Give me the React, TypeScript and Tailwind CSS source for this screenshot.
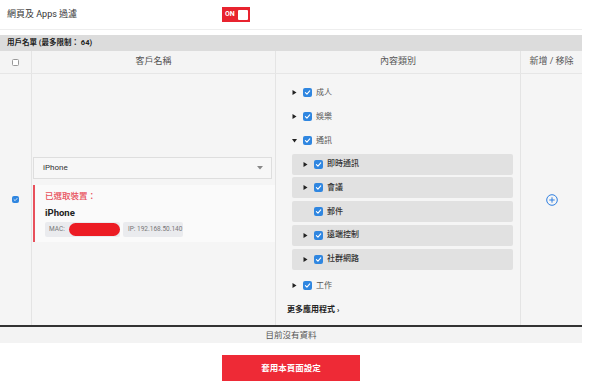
import React from 'react';

const Tri = ({ open }: { open?: boolean }) => (
  <svg width="5" height="5" viewBox="0 0 5 5" className="shrink-0">
    {open ? <path d="M0 1 L5 1 L2.5 4.5 Z" fill="#222" /> : <path d="M0.5 0 L4.5 2.5 L0.5 5 Z" fill="#222" />}
  </svg>
);

const Check = ({ size = 9 }: { size?: number }) => (
  <span
    className="shrink-0 rounded-[2px] bg-[#2f86e0] flex items-center justify-center"
    style={{ width: size, height: size }}
  >
    <svg width={size - 2} height={size - 2} viewBox="0 0 10 10">
      <path d="M2 5.2 L4.2 7.3 L8.2 2.8" fill="none" stroke="#fff" strokeWidth="1.6" strokeLinecap="round" strokeLinejoin="round" />
    </svg>
  </span>
);

const TopItem = ({ label, open }: { label: string; open?: boolean }) => (
  <div className="h-[24px] flex items-center">
    <Tri open={open} />
    <span className="ml-[6px]"><Check /></span>
    <span className="ml-[4px] text-[#555]">{label}</span>
  </div>
);

const SubItem = ({ label, arrow = true }: { label: string; arrow?: boolean }) => (
  <div className="h-[21px] rounded-[2px] bg-[#e1e1e1] flex items-center pl-[11px]">
    <span className="w-[5px] shrink-0">{arrow && <Tri />}</span>
    <span className="ml-[6px]"><Check /></span>
    <span className="ml-[4px] font-medium text-[#333]">{label}</span>
  </div>
);

export default function App() {
  return (
    <div className="w-[600px] h-[385px] bg-white font-['Roboto','Noto_Sans_CJK_TC',sans-serif] text-[8px] text-[#333] overflow-hidden">
      <div className="w-[582px]">
        {/* filter toggle */}
        <div className="h-[30px] flex items-center border-b border-[#eeeeee]">
          <span className="pl-[7px] w-[222px] text-[9px] text-[#333]">網頁及 Apps 過濾</span>
          <div className="w-[28px] h-[15px] bg-[#e8232f] flex items-center justify-between pl-[3px] pr-[2px]">
            <span className="text-[7px] font-bold text-white leading-none">ON</span>
            <span className="w-[10px] h-[10px] bg-white rounded-[1px]" />
          </div>
        </div>

        <div className="mt-[5px] h-[16px] bg-[#dcdcdc] flex items-center pl-[7px] font-bold text-[7.5px] text-[#222]">
          用戶名單 (最多限制： 64)
        </div>

        {/* header */}
        <div className="grid grid-cols-[32px_244px_245px_61px] h-[23px] bg-[#f4f4f4] border-b border-[#e6e6e6] text-[9px] text-[#555]">
          <div className="flex items-center justify-center border-r border-[#e4e4e4]">
            <span className="w-[7px] h-[7px] bg-white border border-[#999] rounded-[1.5px]" />
          </div>
          <div className="flex items-center justify-center border-r border-[#e4e4e4]">客戶名稱</div>
          <div className="flex items-center justify-center border-r border-[#e4e4e4]">內容類別</div>
          <div className="flex items-center justify-center">新增 / 移除</div>
        </div>

        {/* body */}
        <div className="grid grid-cols-[32px_244px_245px_61px] h-[251px] bg-[#f5f5f5]">
          <div className="flex items-center justify-center border-r border-[#e4e4e4]">
            <Check size={7} />
          </div>

          <div className="flex flex-col justify-center pl-[1px] pr-[1px] border-r border-[#e4e4e4]">
            <div className="w-[239px] h-[22px] bg-[#f7f7f7] border border-[#dedede] flex items-center justify-between pl-[9px] pr-[8px]">
              <span className="text-[#333]">iPhone</span>
              <svg width="6" height="4" viewBox="0 0 6 4"><path d="M0 0 L6 0 L3 3.5 Z" fill="#888" /></svg>
            </div>
            <div className="mt-[6px] w-[242px] h-[57px] bg-[#fafafa] border-l-2 border-[#e8505b] pl-[10px] flex flex-col">
              <span className="mt-[5px] text-[8.5px] text-[#e8505b] font-medium">已選取裝置：</span>
              <span className="mt-[3px] text-[9.5px] font-bold text-[#222]">iPhone</span>
              <div className="mt-[2px] flex gap-[3px] text-[6.5px] text-[#777]">
                <span className="w-[75px] h-[15px] bg-[#eaebee] rounded-[2px] flex items-center pl-[4px]">
                  MAC:
                  <span className="ml-[4px] w-[54px] h-[13px] rounded-full bg-[#ec1c24]" />
                </span>
                <span className="w-[60px] h-[15px] bg-[#eaebee] rounded-[2px] flex items-center pl-[5px]">IP: 192.168.50.140</span>
              </div>
            </div>
          </div>

          <div className="flex flex-col justify-center pt-[3px] pl-[16px] pr-[7px] border-r border-[#e4e4e4]">
            <TopItem label="成人" />
            <TopItem label="娛樂" />
            <TopItem label="通訊" open />
            <div className="mt-[1px] flex flex-col gap-[2.75px]">
              <SubItem label="即時通訊" />
              <SubItem label="會議" />
              <SubItem label="郵件" arrow={false} />
              <SubItem label="遠端控制" />
              <SubItem label="社群網路" />
            </div>
            <div className="mt-[4px]"><TopItem label="工作" /></div>
            <div className="h-[24px] flex items-center -ml-[5px] font-bold text-[#222]">更多應用程式 ›</div>
          </div>

          <div className="flex items-center justify-center">
            <svg width="12" height="12" viewBox="0 0 12 12">
              <circle cx="6" cy="6" r="5.3" fill="none" stroke="#2f7fe0" strokeWidth="1" />
              <path d="M6 3.3 V8.7 M3.3 6 H8.7" stroke="#2f7fe0" strokeWidth="1" />
            </svg>
          </div>
        </div>

        <div className="h-[2px] bg-[#333]" />
        <div className="h-[16px] bg-[#f3f3f3] flex items-center justify-center text-[8.5px] text-[#555]">目前沒有資料</div>

        <div className="mt-[12px] flex justify-center">
          <button className="w-[138px] h-[26px] bg-[#ee2a36] text-white font-bold text-[8.5px]">套用本頁面設定</button>
        </div>
      </div>
    </div>
  );
}
